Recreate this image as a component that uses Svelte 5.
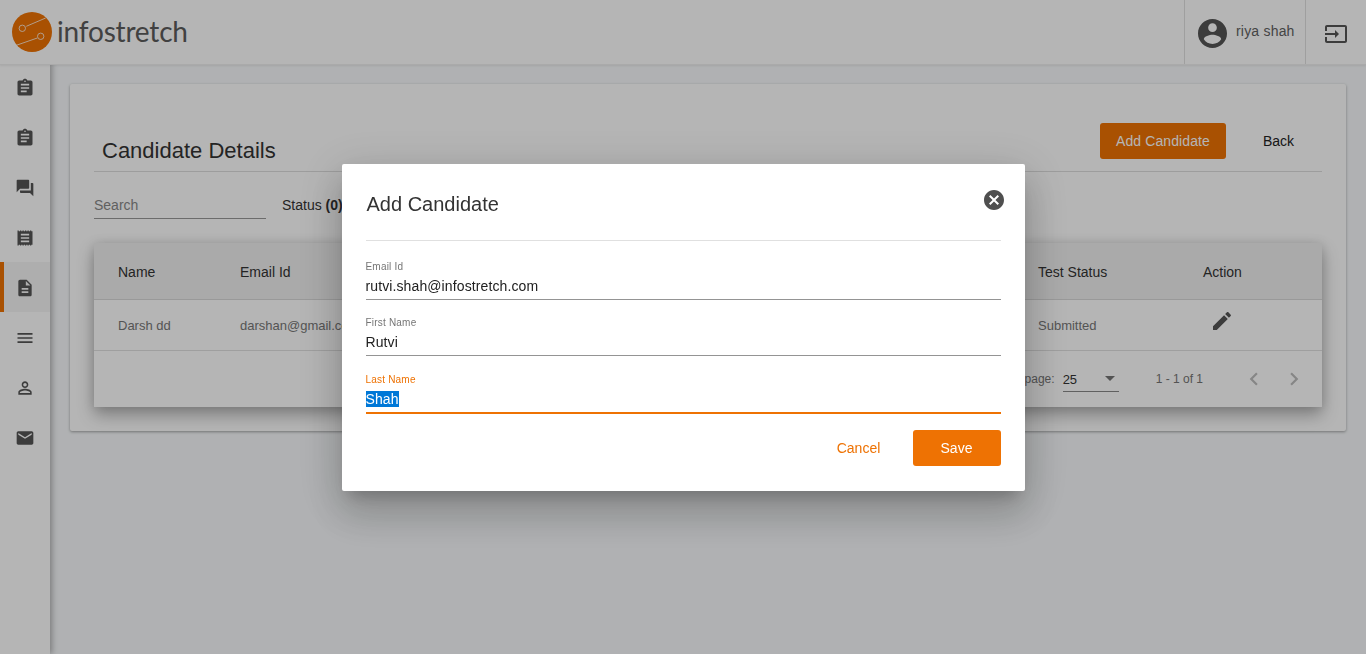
<script lang="ts">
	const icons = {
		assignment: 'M19 3h-4.18C14.4 1.84 13.3 1 12 1c-1.3 0-2.4.84-2.82 2H5c-1.1 0-2 .9-2 2v14c0 1.1.9 2 2 2h14c1.1 0 2-.9 2-2V5c0-1.1-.9-2-2-2zm-7 0c.55 0 1 .45 1 1s-.45 1-1 1-1-.45-1-1 .45-1 1-1zm2 14H7v-2h7v2zm3-4H7v-2h10v2zm0-4H7V7h10v2z',
		forum: 'M21 6h-2v9H6v2c0 .55.45 1 1 1h11l4 4V7c0-.55-.45-1-1-1zm-4 6V3c0-.55-.45-1-1-1H3c-.55 0-1 .45-1 1v14l4-4h10c.55 0 1-.45 1-1z',
		receipt: 'M3 3h1.5v1H6V3h1.5v1H9V3h1.5v1H12V3h1.5v1H15V3h1.5v1H18V3h1.5v1H21v16h-1.5v1H18v-1h-1.5v1H15v-1h-1.5v1H12v-1h-1.5v1H9v-1H7.500v1H6v-1H4.500v1H3V3zm4 4v2h10V7H7zm0 4v2h10v-2H7zm0 4v2h10v-2H7z',
		description: 'M14 2H6c-1.1 0-1.99.9-1.99 2L4 20c0 1.1.89 2 1.99 2H18c1.1 0 2-.9 2-2V8l-6-6zm2 16H8v-2h8v2zm0-4H8v-2h8v2zm-3-5V3.5L18.5 9H13z',
		menu: 'M3 18h18v-2H3v2zm0-5h18v-2H3v2zm0-7v2h18V6H3z',
		person: 'M12 5.9c1.16 0 2.1.94 2.1 2.1s-.94 2.1-2.1 2.1S9.900 9.160 9.900 8s.94-2.1 2.1-2.1m0 9c2.97 0 6.1 1.46 6.1 2.1v1.1H5.900V17c0-.64 3.13-2.1 6.1-2.1M12 4C9.790 4 8 5.790 8 8s1.790 4 4 4 4-1.790 4-4-1.790-4-4-4zm0 9c-2.670 0-8 1.340-8 4v3h16v-3c0-2.660-5.330-4-8-4z',
		email: 'M20 4H4c-1.1 0-1.99.9-1.99 2L2 18c0 1.1.9 2 2 2h16c1.1 0 2-.9 2-2V6c0-1.1-.9-2-2-2zm0 4l-8 5-8-5V6l8 5 8-5v2z'
	};
	const nav = ['assignment', 'assignment', 'forum', 'receipt', 'description', 'menu', 'person', 'email'];
	const fields = [
		{ label: 'Email Id', value: 'rutvi.shah@infostretch.com' },
		{ label: 'First Name', value: 'Rutvi' }
	];
</script>

<header class="topbar">
	<div class="brand">
		<svg class="logo" viewBox="0 0 40 40" aria-hidden="true">
			<circle cx="20" cy="20" r="20" fill="#ee7203" />
			<g fill="none" stroke="#fff" stroke-width="0.9" opacity="0.85">
				<circle cx="10.300" cy="16.300" r="3.200" />
				<path d="M14.300 14.300L33.700 6" />
				<circle cx="28.700" cy="24.300" r="3.200" />
				<path d="M25.300 26L4.300 33.300" />
			</g>
		</svg>
		<span class="brand-name">infostretch</span>
	</div>
	<div class="user">
		<svg class="avatar" viewBox="2 2 20 20" aria-hidden="true">
			<path d="M12 2C6.48 2 2 6.48 2 12s4.48 10 10 10 10-4.48 10-10S17.52 2 12 2zm0 3c1.66 0 3 1.34 3 3s-1.34 3-3 3-3-1.34-3-3 1.34-3 3-3zm0 14.200c-2.500 0-4.710-1.280-6-3.220.03-1.990 4-3.080 6-3.080 1.990 0 5.970 1.090 6 3.080-1.290 1.940-3.500 3.220-6 3.220z" />
		</svg>
		<span>riya shah</span>
	</div>
	<div class="logout">
		<svg viewBox="0 0 24 24" aria-hidden="true">
			<path d="M21 3.010H3c-1.100 0-2 .9-2 2V9h2V4.990h18v14.030H3V15H1v4.010c0 1.100.9 1.980 2 1.980h18c1.100 0 2-.88 2-1.980v-14c0-1.110-.9-2-2-2zM11 16l4-4-4-4v3H1v2h10v3z" />
		</svg>
	</div>
</header>

<div class="shell">
	<nav class="sidebar">
		{#each nav as name, i}
			<div class="nav-item" class:active={i === 4}>
				<svg viewBox="0 0 24 24" aria-hidden="true"><path d={icons[name]} /></svg>
			</div>
		{/each}
	</nav>

	<main class="content">
		<section class="card">
			<div class="card-head">
				<h1>Candidate Details</h1>
				<div class="head-actions">
					<button class="btn-primary" type="button">Add Candidate</button>
					<button class="btn-text" type="button">Back</button>
				</div>
			</div>

			<div class="filters">
				<div class="search">Search</div>
				<div class="status">Status <b>(0)</b></div>
			</div>

			<div class="table">
				<div class="row row-head">
					<span class="col-name">Name</span>
					<span class="col-email">Email Id</span>
					<span class="col-status">Test Status</span>
					<span class="col-action">Action</span>
				</div>
				<div class="row row-body">
					<span class="col-name">Darsh dd</span>
					<span class="col-email">darshan@gmail.com</span>
					<span class="col-status">Submitted</span>
					<span class="col-action">
						<svg class="edit" viewBox="0 0 24 24" aria-hidden="true">
							<path d="M3 17.250V21h3.750L17.810 9.940l-3.750-3.750L3 17.250zM20.710 7.040c.39-.39.39-1.020 0-1.410l-2.340-2.340c-.39-.39-1.020-.39-1.410 0l-1.830 1.830 3.750 3.750 1.830-1.830z" />
						</svg>
					</span>
				</div>
				<div class="pager">
					<span class="per-page">Rows per page:</span>
					<div class="select">
						<span>25</span>
						<svg viewBox="0 0 10 5" aria-hidden="true"><path d="M0 0h10L5 5z" /></svg>
					</div>
					<span class="range">1 - 1 of 1</span>
					<svg class="chev" viewBox="0 0 24 24" aria-hidden="true"><path d="M15.410 7.410L14 6l-6 6 6 6 1.410-1.410L10.830 12z" /></svg>
					<svg class="chev" viewBox="0 0 24 24" aria-hidden="true"><path d="M10 6L8.590 7.410 13.170 12l-4.580 4.590L10 18l6-6z" /></svg>
				</div>
			</div>
		</section>
	</main>
</div>

<div class="backdrop">
	<div class="dialog" role="dialog" aria-label="Add Candidate">
		<div class="dialog-head">
			<h2>Add Candidate</h2>
			<svg class="close" viewBox="2 2 20 20" aria-hidden="true">
				<path d="M12 2C6.470 2 2 6.470 2 12s4.470 10 10 10 10-4.470 10-10S17.530 2 12 2zm5 13.590L15.590 17 12 13.410 8.410 17 7 15.590 10.590 12 7 8.410 8.410 7 12 10.590 15.590 7 17 8.410 13.410 12 17 15.590z" />
			</svg>
		</div>
		{#each fields as field}
			<div class="field">
				<span class="field-label">{field.label}</span>
				<span class="field-value">{field.value}</span>
			</div>
		{/each}
		<div class="field focused">
			<span class="field-label">Last Name</span>
			<span class="field-value"><mark>Shah</mark></span>
		</div>
		<div class="dialog-actions">
			<button class="btn-cancel" type="button">Cancel</button>
			<button class="btn-save" type="button">Save</button>
		</div>
	</div>
</div>

<style>
	:global(body) {
		background: #f8fafc;
		font-family: 'Liberation Sans', Arial, sans-serif;
		color: #212121;
		overflow: hidden;
	}

	svg {
		display: block;
		fill: currentColor;
	}

	button {
		font-family: inherit;
		border: 0;
		cursor: pointer;
	}

	.topbar {
		position: relative;
		z-index: 2;
		display: flex;
		align-items: stretch;
		height: 64px;
		background: #fff;
		box-shadow: 0 1px 2px rgba(0, 0, 0, 0.08);
		border-bottom: 1px solid #f0f0f0;
	}

	.brand {
		display: flex;
		align-items: center;
		gap: 5px;
		flex: 1;
		padding-left: 12px;
	}

	.logo {
		width: 40px;
		height: 40px;
	}

	.brand-name {
		font-family: Lato, sans-serif;
		font-size: 28px;
		letter-spacing: -0.18px;
		color: #5c5c5c;
		line-height: 1;
		margin-bottom: 3px;
	}

	.user {
		display: flex;
		align-items: center;
		gap: 9px;
		width: 121px;
		box-sizing: border-box;
		padding-left: 13px;
		border-left: 1px solid #e0e0e0;
		font-size: 14px;
		letter-spacing: 0.2px;
		color: #616161;
	}

	.user span {
		margin-bottom: 2px;
	}

	.avatar {
		width: 29px;
		height: 29px;
		margin-top: 2px;
		color: #555;
	}

	.logout {
		display: flex;
		align-items: center;
		justify-content: center;
		box-sizing: border-box;
		width: 61px;
		padding-top: 3px;
		border-left: 1px solid #e0e0e0;
		color: #555;
	}

	.logout svg {
		width: 24px;
		height: 24px;
	}

	.shell {
		display: flex;
		height: 589px;
	}

	.sidebar {
		position: relative;
		z-index: 1;
		flex: none;
		width: 50px;
		margin-top: -3px;
		background: #fff;
		box-shadow: 2px 0 6px rgba(0, 0, 0, 0.3);
	}

	.nav-item {
		display: flex;
		align-items: center;
		justify-content: center;
		box-sizing: border-box;
		height: 50px;
		padding: 2px 1px 0 0;
		color: #555;
	}

	.nav-item svg {
		width: 20px;
		height: 20px;
	}

	.nav-item.active {
		background: #f5f5f5;
		box-shadow: inset 4px 0 0 #ee7203;
	}

	.content {
		flex: 1;
		padding: 19px 20px 0;
		min-width: 0;
	}

	.card {
		height: 347px;
		box-sizing: border-box;
		padding: 39px 24px 0;
		background: #fff;
		border-radius: 2px;
		box-shadow: 0 1px 3px rgba(0, 0, 0, 0.35);
	}

	.card-head {
		display: flex;
		justify-content: space-between;
		align-items: flex-end;
		height: 48px;
		border-bottom: 1px solid #ddd;
	}

	h1 {
		margin: 0 0 6px 8px;
		font-size: 22px;
		font-weight: 400;
		line-height: 28px;
		color: #333;
	}

	.head-actions {
		display: flex;
		align-items: center;
		align-self: flex-start;
	}

	.btn-primary {
		width: 126px;
		height: 36px;
		border-radius: 3px;
		background: #ee7203;
		color: #fff;
		font-size: 14px;
		letter-spacing: 0.1px;
	}

	.btn-text {
		box-sizing: border-box;
		width: 96px;
		height: 36px;
		padding: 0 0 0 9px;
		background: none;
		color: #222;
		font-size: 14px;
	}

	.filters {
		display: flex;
		align-items: flex-start;
		gap: 16px;
		margin-top: 25px;
	}

	.search {
		width: 172px;
		height: 21px;
		font-size: 14px;
		line-height: 17px;
		color: #888;
		border-bottom: 1px solid #999;
	}

	.status {
		font-size: 14px;
		line-height: 17px;
		color: #333;
	}

	.table {
		margin-top: 24px;
		background: #fff;
		box-shadow: 0 8px 16px rgba(0, 0, 0, 0.3), 0 0 10px rgba(0, 0, 0, 0.1);
	}

	.row {
		display: flex;
		align-items: center;
		font-size: 14px;
		border-bottom: 1px solid #e0e0e0;
	}

	.row-head {
		height: 55px;
		padding-top: 1px;
		background: #f0f0f0;
		color: #333;
		border-bottom-color: #d8d8d8;
	}

	.row-body {
		height: 50px;
		font-size: 13px;
		color: #777;
	}

	.col-name {
		width: 122px;
		padding-left: 24px;
		flex: none;
	}

	.col-email {
		width: 798px;
		flex: none;
	}

	.col-status {
		width: 165px;
		flex: none;
	}

	.col-action {
		flex: none;
	}

	.edit {
		width: 24px;
		height: 24px;
		margin: -8px 0 0 7px;
		color: #555;
	}

	.pager {
		display: flex;
		align-items: center;
		justify-content: flex-end;
		height: 56px;
		font-size: 12px;
		color: #757575;
		padding-right: 15px;
	}

	.per-page {
		margin-right: 8px;
	}

	.select {
		display: flex;
		align-items: center;
		justify-content: space-between;
		box-sizing: border-box;
		width: 56px;
		height: 24px;
		padding: 0 4px 0 0;
		margin-top: 2px;
		font-size: 13px;
		color: #333;
		border-bottom: 1px solid #888;
	}

	.select svg {
		width: 10px;
		height: 5px;
		margin-bottom: 2px;
		color: #757575;
	}

	.range {
		margin: 0 34px 0 37px;
	}

	.chev {
		width: 26px;
		height: 26px;
		color: #bdbdbd;
		margin-left: 4px;
	}

	.chev + .chev {
		margin-left: 14px;
	}

	.backdrop {
		position: fixed;
		inset: 0;
		z-index: 10;
		display: flex;
		align-items: center;
		justify-content: center;
		background: rgba(0, 0, 0, 0.29);
	}

	.dialog {
		box-sizing: border-box;
		width: 683px;
		height: 327px;
		padding: 0 24px;
		background: #fff;
		border-radius: 2px;
		box-shadow: 0 11px 15px -7px rgba(0, 0, 0, 0.2), 0 24px 38px 3px rgba(0, 0, 0, 0.14), 0 9px 46px 8px rgba(0, 0, 0, 0.12);
	}

	.dialog-head {
		position: relative;
		height: 76px;
		border-bottom: 1px solid #e0e0e0;
		margin-bottom: 20px;
	}

	h2 {
		margin: 0;
		padding: 28px 0 0 1px;
		font-size: 20px;
		font-weight: 400;
		line-height: 24px;
		color: #333;
	}

	.close {
		position: absolute;
		top: 26px;
		right: -3px;
		width: 20px;
		height: 20px;
		color: #4f4f4f;
	}

	.field {
		display: flex;
		flex-direction: column;
		height: 38px;
		margin-bottom: 17px;
		border-bottom: 1px solid #949494;
	}

	.field-label {
		font-size: 10px;
		line-height: 12px;
		letter-spacing: 0.2px;
		color: #757575;
	}

	.field-value {
		margin-top: 5px;
		font-size: 14px;
		line-height: 16px;
		letter-spacing: 0.11px;
		color: #212121;
	}

	.focused {
		border-bottom: 2px solid #ee7203;
		margin-top: 18px;
		margin-bottom: 0;
	}

	.focused .field-label {
		color: #ee7203;
	}

	mark {
		background: #0078d7;
		color: #fff;
	}

	.dialog-actions {
		display: flex;
		justify-content: flex-end;
		align-items: center;
		margin-top: 16px;
	}

	.btn-cancel {
		width: 88px;
		height: 36px;
		background: none;
		color: #ee7203;
		font-size: 14px;
		margin-right: 10px;
	}

	.btn-save {
		width: 88px;
		height: 36px;
		border-radius: 3px;
		background: #ee7203;
		color: #fff;
		font-size: 14px;
	}
</style>
